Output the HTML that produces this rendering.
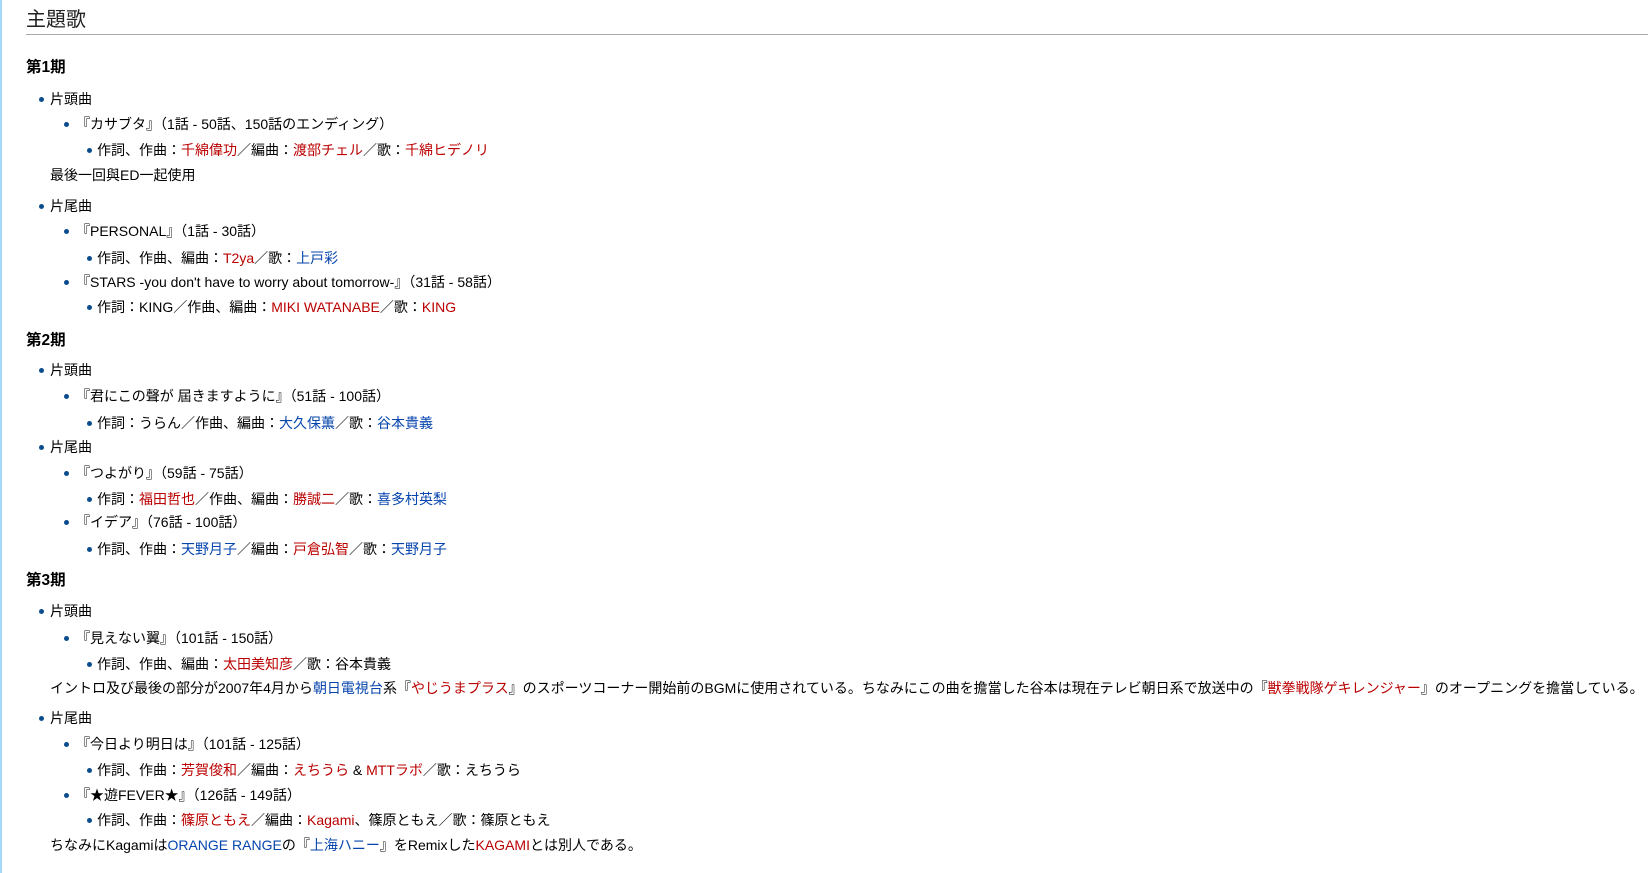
<!DOCTYPE html>
<html><head><meta charset="utf-8"><style>
html,body{margin:0;padding:0;background:#fff;width:1648px;height:873px;overflow:hidden}
body{font-family:"Liberation Sans","Noto Sans CJK JP",sans-serif;font-size:14px;color:#000;position:relative}
.lb{position:absolute;left:0;top:0;width:2px;height:873px;background:#a7d7f9}
.h2{position:absolute;left:26px;top:6px;font-size:20px;line-height:28px;color:#222}
.rule{position:absolute;left:26px;right:0;top:34px;height:1px;background:#aaa}
.l{position:absolute;white-space:nowrap;line-height:20px;margin-top:-10px}
.h3{font-weight:bold;font-size:15.5px;left:26px}
.a{left:50px}.b{left:76px}.c{left:97px}.n{left:50px}
.a:before,.b:before,.c:before{content:"";position:absolute;width:5px;height:5px;border-radius:50%;background:#0b4d8c;top:8px}
.a:before{left:-11px}.b:before{left:-12px}.c:before{left:-10px}
.r{color:#ba0000}.u{color:#0645ad}
</style></head><body>
<div class="lb"></div>
<div class="h2">主題歌</div>
<div class="rule"></div>
<div class="l h3" style="top:68px">第1期</div>
<div class="l a" style="top:99px">片頭曲</div>
<div class="l b" style="top:124px">『カサブタ』（1話 - 50話、150話のエンディング）</div>
<div class="l c" style="top:150px">作詞、作曲：<span class="r">千綿偉功</span>／編曲：<span class="r">渡部チェル</span>／歌：<span class="r">千綿ヒデノリ</span></div>
<div class="l n" style="top:175px">最後一回與ED一起使用</div>
<div class="l a" style="top:206px">片尾曲</div>
<div class="l b" style="top:231px">『PERSONAL』（1話 - 30話）</div>
<div class="l c" style="top:258px">作詞、作曲、編曲：<span class="r">T2ya</span>／歌：<span class="u">上戸彩</span></div>
<div class="l b" style="top:282px">『STARS -you don't have to worry about tomorrow-』（31話 - 58話）</div>
<div class="l c" style="top:307px">作詞：KING／作曲、編曲：<span class="r">MIKI WATANABE</span>／歌：<span class="r">KING</span></div>
<div class="l h3" style="top:341px">第2期</div>
<div class="l a" style="top:370px">片頭曲</div>
<div class="l b" style="top:396px">『君にこの聲が 屆きますように』（51話 - 100話）</div>
<div class="l c" style="top:423px">作詞：うらん／作曲、編曲：<span class="u">大久保薫</span>／歌：<span class="u">谷本貴義</span></div>
<div class="l a" style="top:447px">片尾曲</div>
<div class="l b" style="top:473px">『つよがり』（59話 - 75話）</div>
<div class="l c" style="top:499px">作詞：<span class="r">福田哲也</span>／作曲、編曲：<span class="r">勝誠二</span>／歌：<span class="u">喜多村英梨</span></div>
<div class="l b" style="top:522px">『イデア』（76話 - 100話）</div>
<div class="l c" style="top:549px">作詞、作曲：<span class="u">天野月子</span>／編曲：<span class="r">戸倉弘智</span>／歌：<span class="u">天野月子</span></div>
<div class="l h3" style="top:581px">第3期</div>
<div class="l a" style="top:611px">片頭曲</div>
<div class="l b" style="top:638px">『見えない翼』（101話 - 150話）</div>
<div class="l c" style="top:664px">作詞、作曲、編曲：<span class="r">太田美知彦</span>／歌：谷本貴義</div>
<div class="l n" style="top:688px">イントロ及び最後の部分が2007年4月から<span class="u">朝日電視台</span>系『<span class="r">やじうまプラス</span>』のスポーツコーナー開始前のBGMに使用されている。ちなみにこの曲を擔當した谷本は現在テレビ朝日系で放送中の『<span class="r">獣拳戦隊ゲキレンジャー</span>』のオープニングを擔當している。</div>
<div class="l a" style="top:718px">片尾曲</div>
<div class="l b" style="top:744px">『今日より明日は』（101話 - 125話）</div>
<div class="l c" style="top:770px">作詞、作曲：<span class="r">芳賀俊和</span>／編曲：<span class="r">えちうら</span> &amp; <span class="r">MTTラボ</span>／歌：えちうら</div>
<div class="l b" style="top:795px">『★遊FEVER★』（126話 - 149話）</div>
<div class="l c" style="top:820px">作詞、作曲：<span class="r">篠原ともえ</span>／編曲：<span class="r">Kagami</span>、篠原ともえ／歌：篠原ともえ</div>
<div class="l n" style="top:845px">ちなみにKagamiは<span class="u">ORANGE RANGE</span>の『<span class="u">上海ハニー</span>』をRemixした<span class="r">KAGAMI</span>とは別人である。</div>
</body></html>
